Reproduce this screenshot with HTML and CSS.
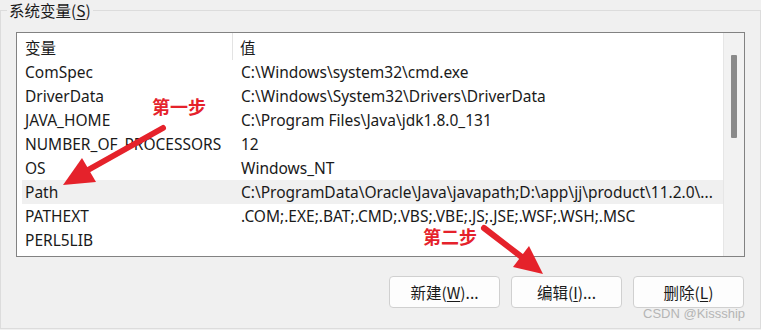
FILE: index.html
```html
<!DOCTYPE html>
<html>
<head>
<meta charset="utf-8">
<link rel="stylesheet" href="styles.css">
</head>
<body>
<div class="page">
  <fieldset class="group">
    <legend class="legend">系统变量(<u>S</u>)</legend>
    <div class="list">
      <div class="list-main">
        <div class="list-head">
          <div class="hcell hname">变量</div>
          <div class="hcell hval">值</div>
        </div>
        <div class="row"><span class="c1">ComSpec</span><span class="c2">C:\Windows\system32\cmd.exe</span></div>
        <div class="row"><span class="c1">DriverData</span><span class="c2">C:\Windows\System32\Drivers\DriverData</span></div>
        <div class="row"><span class="c1">JAVA_HOME</span><span class="c2">C:\Program Files\Java\jdk1.8.0_131</span></div>
        <div class="row"><span class="c1">NUMBER_OF_PROCESSORS</span><span class="c2">12</span></div>
        <div class="row"><span class="c1">OS</span><span class="c2">Windows_NT</span></div>
        <div class="row row-sel"><span class="c1">Path</span><span class="c2">C:\ProgramData\Oracle\Java\javapath;D:\app\jj\product\11.2.0\...</span></div>
        <div class="row"><span class="c1">PATHEXT</span><span class="c2">.COM;.EXE;.BAT;.CMD;.VBS;.VBE;.JS;.JSE;.WSF;.WSH;.MSC</span></div>
        <div class="row"><span class="c1">PERL5LIB</span><span class="c2"></span></div>
      </div>
      <div class="scrollbar"><div class="thumb"></div></div>
    </div>
    <div class="buttons">
      <button class="btn">新建(<u>W</u>)...</button>
      <button class="btn">编辑(<u>I</u>)...</button>
      <button class="btn">删除(<u>L</u>)</button>
    </div>
  </fieldset>
  <div class="watermark">CSDN @Kissship</div>
  <svg class="annot" width="761" height="330" viewBox="0 0 761 330">
    <line x1="163" y1="128" x2="88" y2="170" stroke="#e5222b" stroke-width="6" stroke-linecap="round"/>
    <polygon points="63,185 82,158 96,182" fill="#e5222b"/>
    <line x1="484" y1="228" x2="523" y2="258" stroke="#e5222b" stroke-width="6" stroke-linecap="round"/>
    <polygon points="543,274 513,267 529,246" fill="#e5222b"/>
  </svg>
  <div class="note note1">第一步</div>
  <div class="note note2">第二步</div>
</div>
</body>
</html>
```
FILE: styles.css
```css
html, body {
  margin: 0;
  padding: 0;
  background: #f0f0f0;
}
.page {
  position: relative;
  width: 761px;
  height: 330px;
  overflow: hidden;
  font-family: "Noto Sans", "Noto Sans CJK SC", sans-serif;
  font-size: 15.5px;
  color: #1a1a1a;
}
.group {
  margin: 0;
  width: 761px;
  box-sizing: border-box;
  border: 1px solid #dcdcdc;
  padding: 12px 15px 20px 15px;
  min-width: 0;
}
.legend {
  margin-left: -9px;
  padding: 0 2px;
  line-height: 20px;
  font-family: "Noto Sans CJK SC", "Noto Sans", sans-serif;
}
.legend u, .btn u {
  text-underline-offset: 2px;
}
.list {
  display: flex;
  height: 223px;
  border: 1px solid #828282;
  background: #ffffff;
}
.list-main {
  flex: 1;
  min-width: 0;
  overflow: hidden;
}
.list-head {
  display: flex;
  height: 27px;
  align-items: stretch;
}
.hcell {
  display: flex;
  align-items: center;
  font-family: "Noto Sans CJK SC", sans-serif;
}
.hname {
  width: 207px;
  padding-left: 8px;
  border-right: 1px solid #e3e3e3;
}
.hval {
  padding-left: 7px;
}
.row {
  display: flex;
  height: 24px;
  align-items: center;
  margin-left: 5px;
  padding-left: 3px;
  white-space: nowrap;
}
.row-sel {
  background: #f0f0f0;
}
.c1 {
  width: 208px;
  flex: none;
}
.c2 {
  padding-left: 8px;
}
.scrollbar {
  width: 21px;
  flex: none;
  background: #f2f2f2;
  border-left: 1px solid #e6e6e6;
  box-sizing: border-box;
  padding-top: 22px;
  padding-left: 7px;
}
.thumb {
  width: 6px;
  height: 83px;
  background: #8a8a8a;
  border-radius: 1px;
}
.buttons {
  display: flex;
  justify-content: flex-end;
  gap: 11px;
  margin-top: 19px;
  padding-right: 1px;
}
.btn {
  width: 111px;
  height: 32px;
  border: 1px solid #d0d0d0;
  border-radius: 4px;
  background: #fdfdfd;
  font-family: "Noto Sans CJK SC", "Noto Sans", sans-serif;
  font-size: 15.5px;
  color: #1a1a1a;
  padding: 0;
}
.watermark {
  position: absolute;
  left: 643px;
  top: 307px;
  font-family: "Liberation Sans", Arial, sans-serif;
  font-size: 13px;
  line-height: 13px;
  color: #b5b5b5;
}
.annot {
  position: absolute;
  left: 0;
  top: 0;
}
.note {
  position: absolute;
  font-family: "Noto Sans CJK SC", sans-serif;
  font-weight: 700;
  font-size: 18px;
  line-height: 18px;
  color: #e5222b;
}
.note1 {
  left: 152px;
  top: 97px;
}
.note2 {
  left: 423px;
  top: 227px;
}
```
